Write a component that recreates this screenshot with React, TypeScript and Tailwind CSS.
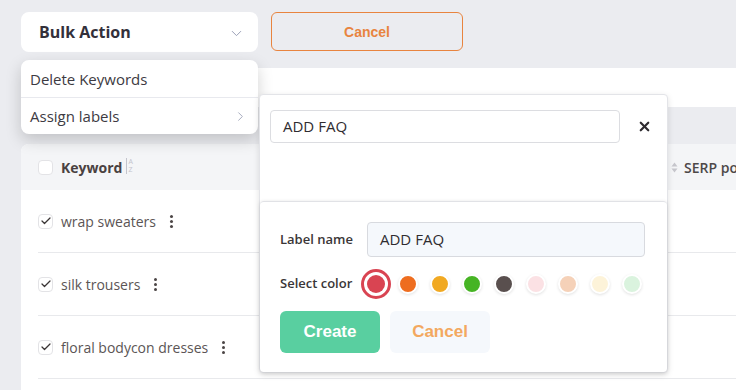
import { Check, ChevronDown, ChevronRight, X } from "lucide-react";

const rows = [
  { name: "wrap sweaters" },
  { name: "silk trousers" },
  { name: "floral bodycon dresses" },
];

const colors = [
  "#ee6d1f",
  "#f1a922",
  "#46b424",
  "#594f4e",
  "#fbe1e4",
  "#f5d1b8",
  "#fdf3d9",
  "#daf3de",
];

const Kebab = () => (
  <span className="flex flex-col gap-[2px] ml-[14px]">
    <span className="w-[3px] h-[3px] rounded-full bg-[#4b4545]" />
    <span className="w-[3px] h-[3px] rounded-full bg-[#4b4545]" />
    <span className="w-[3px] h-[3px] rounded-full bg-[#4b4545]" />
  </span>
);

const App = () => {
  return (
    <div
      className="relative w-[736px] h-[390px] overflow-hidden bg-[#ebecf0] flex flex-col"
      style={{ fontFamily: '"Open Sans", "Noto Sans", sans-serif' }}
    >
      {/* Top actions */}
      <div className="flex gap-[13px] pt-3 pl-[21px]">
        <button className="w-[237px] h-10 rounded-lg bg-white flex items-center justify-between pl-[18px] pr-[13px]">
          <span className="text-[16px] font-bold text-[#33303a]">Bulk Action</span>
          <ChevronDown size={17} strokeWidth={1.4} className="text-[#9aa0b6] mt-[2px]" />
        </button>
        <button className="w-[192px] h-[39px] rounded-md border border-[#e8843f] flex items-center justify-center pt-[2px] text-[14px] font-bold text-[#e8843f] [font-family:'Liberation_Sans',Arial,sans-serif]">
          Cancel
        </button>
      </div>

      {/* Filter strip */}
      <div className="mt-4 ml-[21px] h-[39px] bg-white" />

      {/* Table */}
      <div className="mt-[37px] ml-[21px] flex-1 bg-white rounded-tl-lg overflow-hidden">
        <div className="h-[46px] bg-[#f4f5f7] flex items-center pl-[17px]">
          <span className="w-[15px] h-[15px] rounded-sm border border-[#e3e3e6] bg-white" />
          <span className="ml-2 text-[14px] font-bold text-[#4a4141]">Keyword</span>
          <span className="ml-[4px] flex items-stretch gap-[1px] text-[#c4c4cc] -mt-[2px]">
            <span className="w-px bg-[#c4c4cc]" />
            <span className="flex flex-col leading-[8px] text-[7px]">
              <span>A</span>
              <span>Z</span>
            </span>
          </span>
          <span className="ml-auto flex items-center gap-[6px] text-[14px] font-semibold text-[#4d4848] mr-[-70px] w-[135px] whitespace-nowrap">
            <svg width="7" height="11" viewBox="0 0 7 11" className="shrink-0">
              <path d="M3.5 0.5 L6.5 4.5 H0.5 Z" fill="#c6c6cc" />
              <path d="M3.5 10.5 L6.5 6.5 H0.5 Z" fill="#c6c6cc" />
            </svg>
            <span>SERP position</span>
          </span>
        </div>
        {rows.map((r) => (
          <div key={r.name} className="ml-[17px] h-[63px] border-b border-[#e8e9ec] flex items-center">
            <span className="w-[15px] h-[15px] rounded-sm border border-[#e3e3e6] bg-white flex items-center justify-center">
              <Check size={12} strokeWidth={2.5} className="text-[#3a3535]" />
            </span>
            <span className="ml-2 text-[14px] text-[#5b5555]">{r.name}</span>
            <Kebab />
          </div>
        ))}
      </div>

      {/* Bulk action menu */}
      <div className="absolute left-[21px] top-[60px] w-[237px] rounded-lg bg-white shadow-[0_6px_16px_rgba(0,0,0,0.18)] flex flex-col text-[15px] text-[#3d3a42]">
        <div className="h-[38px] flex items-center px-[9px] pt-[1px] border-b border-[#e8e9ee]">Delete Keywords</div>
        <div className="h-[36px] flex items-center justify-between px-[9px] pr-[10px]">
          Assign labels
          <ChevronRight size={15} strokeWidth={1.4} className="text-[#9aa0b6]" />
        </div>
      </div>

      {/* Label popover */}
      <div className="absolute left-[259px] top-[94px] w-[409px] h-[279px] bg-white border border-[#e3e4e8] rounded-sm shadow-[0_2px_6px_rgba(0,0,0,0.12)] flex flex-col">
        <div className="h-[106px] flex items-start pt-[15px] pl-[10px]">
          <div className="w-[350px] h-[33px] border border-[#dcdde1] rounded-[4px] flex items-center pl-3 text-[15px] text-[#2f2c30]">
            ADD FAQ
          </div>
          <X size={15} strokeWidth={3.5} className="ml-[17px] mt-[9px] text-[#2e2b2f]" />
        </div>
        <div className="flex-1 border-t border-[#e1e2e6] rounded-sm shadow-[0_1px_4px_rgba(0,0,0,0.14)] px-[20px] pt-[20px] flex flex-col">
          <div className="flex items-center">
            <span className="w-[87px] text-[13px] font-semibold text-[#3a3637]">Label name</span>
            <div className="w-[278px] h-[35px] rounded-[4px] border border-[#d8dadf] bg-[#f5f8fc] flex items-center pl-[12px] text-[15px] text-[#2f2c30]">
              ADD FAQ
            </div>
          </div>
          <div className="flex items-center mt-[12px]">
            <span className="w-[82px] text-[13px] font-semibold text-[#3a3637]">Select color</span>
            <div className="flex gap-[2px]">
              <span className="w-[30px] h-[30px] rounded-full border-[3px] border-[#d94452] p-[3px]">
                <span className="block w-full h-full rounded-full bg-[#d94452]" />
              </span>
              {colors.map((c) => (
                <span key={c} className="w-[30px] h-[30px] flex items-center justify-center">
                  <span
                    className="w-[20px] h-[20px] rounded-full border-2 border-white shadow-[0_1px_3px_rgba(0,0,0,0.12)]"
                    style={{ backgroundColor: c }}
                  />
                </span>
              ))}
            </div>
          </div>
          <div className="flex gap-[10px] mt-[12px] [font-family:'Liberation_Sans',Arial,sans-serif]">
            <button className="w-[100px] h-[42px] rounded-md bg-[#59cfa0] text-white text-[17px] font-bold">Create</button>
            <button className="w-[100px] h-[42px] rounded-md bg-[#f5f8fc] text-[#f3a85f] text-[17px] font-bold">Cancel</button>
          </div>
        </div>
      </div>
    </div>
  );
};

export default App;
